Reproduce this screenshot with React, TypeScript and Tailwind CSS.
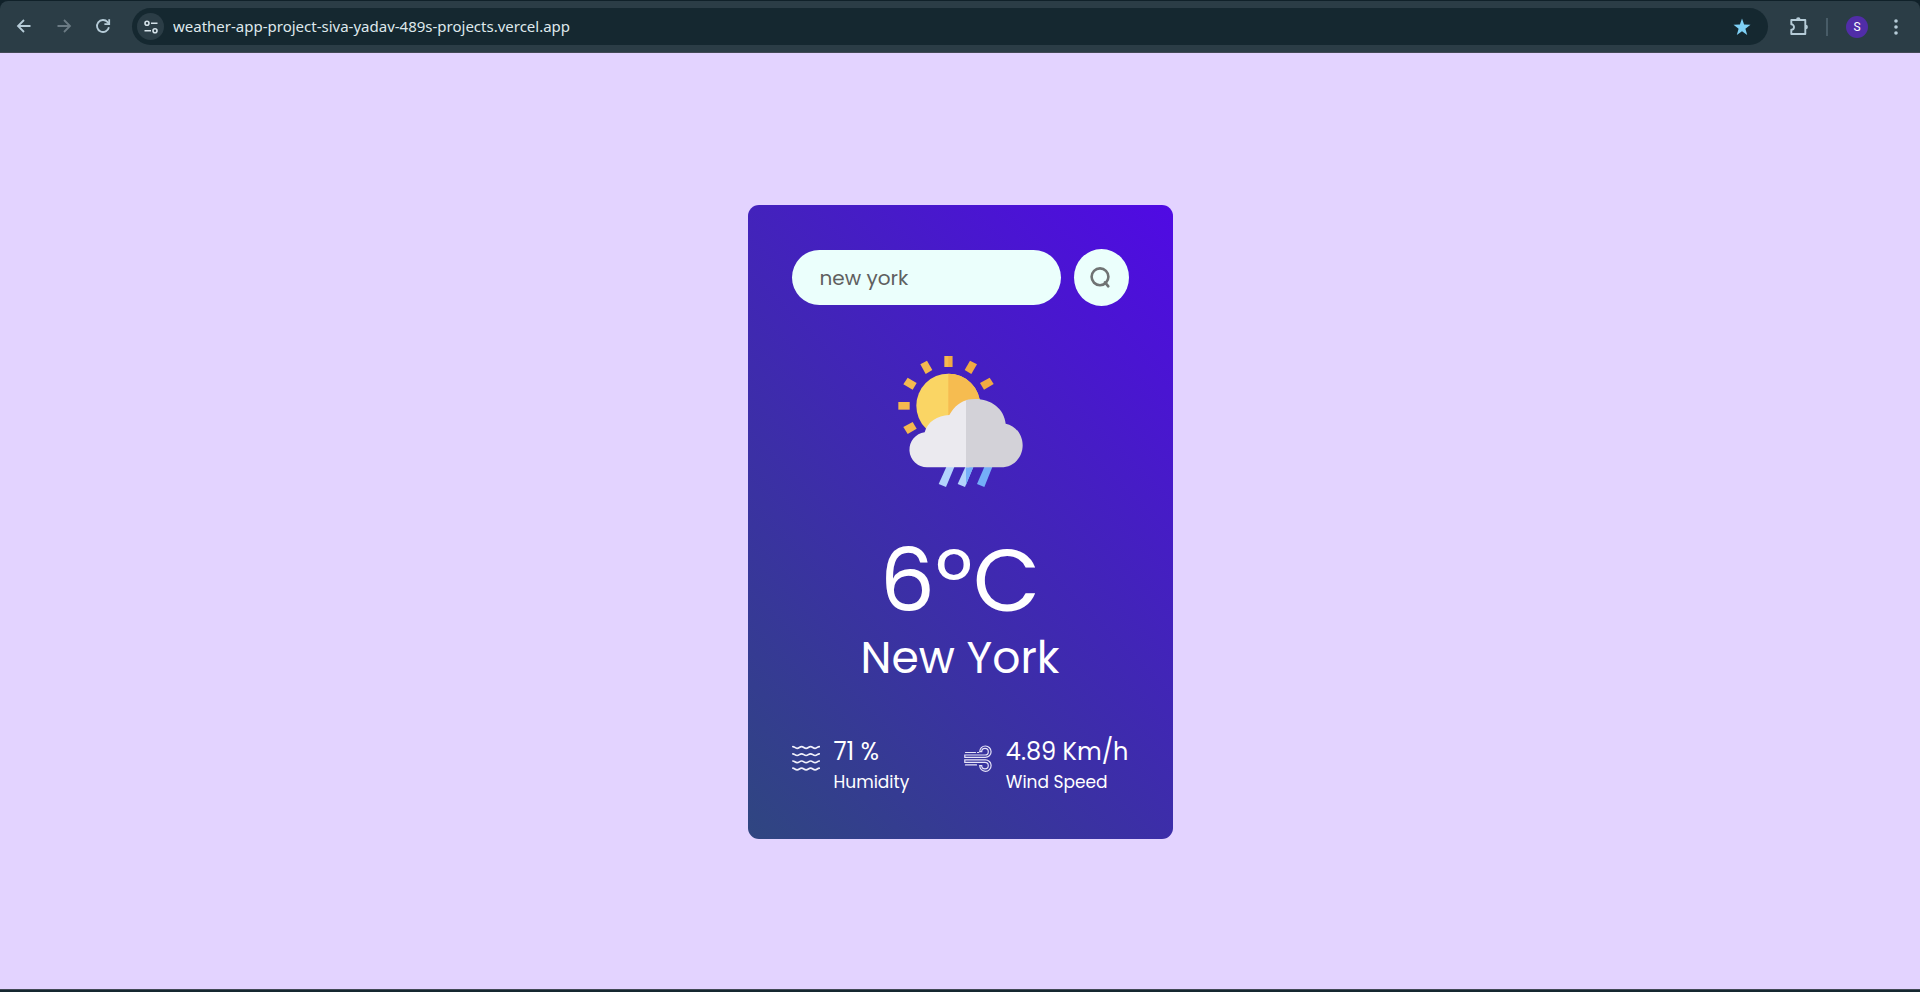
import type { ReactNode } from "react";

function ToolbarButton({ label, className, children }: { label: string; className: string; children: ReactNode }) {
  return (
    <button type="button" aria-label={label} className={`flex size-8 shrink-0 items-center justify-center ${className}`}>
      {children}
    </button>
  );
}

function BrowserToolbar() {
  return (
    <header className="bg-[#102129] pt-px font-['Noto_Sans','Open_Sans',sans-serif]">
      <div className="flex h-[52px] items-center rounded-t-lg border-b border-[#434a56] bg-[#2b3d46] pr-2 pl-2">
        <ToolbarButton label="Back" className="pb-px text-[#b6ccd8]">
          <svg viewBox="0 0 16 16" className="size-4" fill="none" stroke="currentColor" strokeWidth="1.8">
            <path d="M14.5 8H2.5M8 2 2 8l6 6" />
          </svg>
        </ToolbarButton>
        <ToolbarButton label="Forward" className="ml-2 pb-px text-[#6b7b84]">
          <svg viewBox="0 0 16 16" className="size-4" fill="none" stroke="currentColor" strokeWidth="1.8">
            <path d="M1.5 8h12M8 2l6 6-6 6" />
          </svg>
        </ToolbarButton>
        <ToolbarButton label="Reload" className="ml-[7px] pb-px text-[#b6ccd8]">
          <svg viewBox="0 0 16 16" className="size-4" fill="none" stroke="currentColor" strokeWidth="1.8">
            <path d="M13.9 9.2A6 6 0 1 1 12.6 4.1L14 5.6" />
            <path d="M14.2 1.2v5H9.4" />
          </svg>
        </ToolbarButton>
        <div className="ml-[13px] flex h-[37px] min-w-0 flex-1 items-center rounded-full bg-[#152830] pr-2 pl-[5px]">
          <button
            type="button"
            aria-label="View site information"
            className="flex size-[27px] shrink-0 items-center justify-center rounded-full bg-[#2b3d46] text-[#d5e2e9]"
          >
            <svg viewBox="0 0 16 16" className="size-4" fill="none" stroke="currentColor" strokeWidth="1.6">
              <circle cx="4" cy="4.3" r="2" />
              <path d="M8 4.3h6.5M1.5 11.7h6.5" />
              <circle cx="12" cy="11.7" r="2" />
            </svg>
          </button>
          <input
            aria-label="Address"
            type="text"
            defaultValue="weather-app-project-siva-yadav-489s-projects.vercel.app"
            className="ml-[9px] h-7 min-w-0 flex-1 bg-transparent pb-0.5 text-[15px] text-[#dfe8ec] outline-none"
          />
          <button type="button" aria-label="Bookmark this tab" className="flex size-9 items-center justify-center text-[#7ed0f5]">
            <svg viewBox="0 0 18 18" className="size-[18px]" fill="currentColor">
              <path d="M9 .6l2.1 6 6.4.2-5.1 3.9 1.8 6.2L9 13.2l-5.2 3.7 1.8-6.2L.5 6.8l6.4-.2z" />
            </svg>
          </button>
        </div>
        <ToolbarButton label="Extensions" className="ml-[15px] pb-px text-[#b6ccd8]">
          <svg viewBox="0 0 18 18" className="size-[18px]" fill="none" stroke="currentColor" strokeWidth="1.9" strokeLinejoin="round">
            <path d="M1.3 3h14v14h-14v-4.300a2.700 2.700 0 0 0 0-5.400z" />
            <path d="M6.100 2.500a2.200 2.200 0 0 1 4.400 0zM15.700 7.800a2.200 2.200 0 0 1 0 4.400z" fill="currentColor" stroke="none" />
          </svg>
        </ToolbarButton>
        <div className="ml-[11px] h-[18px] w-0.5 bg-[#485c67]" />
        <ToolbarButton label="Profile" className="ml-[13px]">
          <span className="flex size-[22px] items-center justify-center rounded-full bg-[#512da8] font-[Roboto,sans-serif] text-xs leading-none text-white">
            S
          </span>
        </ToolbarButton>
        <ToolbarButton label="Menu" className="ml-[7px] text-[#b6ccd8]">
          <svg viewBox="0 0 16 16" className="size-4" fill="currentColor">
            <circle cx="8" cy="2" r="1.8" />
            <circle cx="8" cy="8" r="1.8" />
            <circle cx="8" cy="14" r="1.8" />
          </svg>
        </ToolbarButton>
      </div>
    </header>
  );
}

function RainIcon() {
  return (
    <svg viewBox="0 0 480 480" className="size-40" role="img" aria-label="Rain">
      <g fill="#f5b94f">
        <path d="M193 48h24v33h-24z" />
        <path d="M121 73l20-11 16 28-20 12z" />
        <path d="M83 113l27 16-12 20-28-16z" />
        <path d="M55 186h34v23H55z" />
        <path d="M70 261l28-15 12 20-27 16z" />
      </g>
      <g fill="#f1aa43">
        <path d="M205 48h12v33h-12z" />
        <path d="M270 62l21 11-17 29-20-12z" />
        <path d="M329 113l12 19-29 17-12-20z" />
      </g>
      <circle cx="205" cy="197" r="96" fill="#fad564" />
      <path d="M205 101a96 96 0 0 1 0 192z" fill="#f6bc50" />
      <path d="M199 381h24l-25 60-22-9z" fill="#b3d3fc" />
      <path d="M256 381h24l-25 60-22-9z" fill="#b3d3fc" />
      <path d="M258 381h22l-22 53z" fill="#74aef8" />
      <path d="M313 381h24l-24 60-22-9z" fill="#74aef8" />
      <path
        d="M141 382a53 53 0 0 1-7-105.500C143 246 171 226 208 225c15-27 35-43 60-46v203z"
        fill="#ebeaef"
      />
      <path d="M258 180c58-14 114 17 119 71 29 5 51 33 51 65 0 37-28 66-65 66H258z" fill="#d3d2d8" />
    </svg>
  );
}

const WAVE = "c1.8 0 2.3 1.7 4.3 1.7s2.5-1.7 4.5-1.7 2.5 1.7 4.5 1.7 2.5-1.7 4.5-1.7 2.5 1.7 4.5 1.7 2.3-1.7 4.2-1.7";

function HumidityIcon() {
  return (
    <svg viewBox="0 0 28 28" className="size-7" fill="none" stroke="#f1f1fb" strokeWidth="1.7" strokeLinecap="round" aria-hidden="true">
      {[1.6, 8.8, 16, 23.2].map((y) => (
        <path key={y} d={`M.8 ${y}${WAVE}`} />
      ))}
    </svg>
  );
}

function WindIcon() {
  return (
    <svg viewBox="0 0 28 28" className="size-7" fill="none" stroke="#e6e4f8" strokeWidth="1.2" strokeLinecap="round" aria-hidden="true">
      <path d="M1.5 7.5h10M13.5 7.5h1.2" />
      <path d="M.8 10H21a3.3 3.3 0 1 0-3.3-3.3h-2A5.7 5.7 0 1 1 21.3 12.4H.8z" />
      <path d="M.8 14.9h20.5a5.7 5.7 0 1 1-5.6 5.7h2a3.3 3.3 0 1 0 3.3-3.3H.8z" />
      <path d="M1.5 19.9h11" />
    </svg>
  );
}

function Detail({ icon, value, label }: { icon: ReactNode; value: string; label: string }) {
  return (
    <div className="flex items-start gap-3.5">
      <div className="pt-2.5">{icon}</div>
      <div>
        <p className="text-2xl leading-[34px]">{value}</p>
        <p className="text-[17px] leading-[26px]">{label}</p>
      </div>
    </div>
  );
}

function WeatherCard() {
  return (
    <section className="w-full max-w-[425px] rounded-[11px] bg-[linear-gradient(45deg,#2f4680,#500ae4)] p-11 text-white">
      <form className="flex items-center gap-[13px]" onSubmit={(event) => event.preventDefault()}>
        <input
          type="text"
          aria-label="City"
          defaultValue="new york"
          spellCheck={false}
          className="h-[55px] min-w-0 flex-1 rounded-full bg-[#ebfffc] px-7 text-xl text-[#606060] outline-none"
        />
        <button
          type="submit"
          aria-label="Search"
          className="flex h-[57px] w-[55px] shrink-0 items-center justify-center rounded-[50%] bg-[#ebfffc]"
        >
          <svg viewBox="0 0 22 22" className="size-[22px]" fill="none" stroke="#6f7373" strokeWidth="2.6" strokeLinecap="round">
            <circle cx="10" cy="9.800" r="8.400" />
            <path d="M15 15.300l3.300 4" />
          </svg>
        </button>
      </form>
      <div className="mt-[34px] flex flex-col items-center">
        <RainIcon />
        <h1 className="mt-[30px] text-[87px] leading-[102px]">6ºC</h1>
        <h2 className="text-[44px] leading-[52px]">New York</h2>
      </div>
      <div className="mt-[51px] flex justify-between">
        <Detail icon={<HumidityIcon />} value="71 %" label="Humidity" />
        <Detail icon={<WindIcon />} value="4.89 Km/h" label="Wind Speed" />
      </div>
    </section>
  );
}

export default function App() {
  return (
    <div className="flex min-h-screen flex-col bg-[#e3d3ff]">
      <BrowserToolbar />
      <main className="flex flex-1 items-center justify-center pt-0.5 font-[Poppins,Inter,sans-serif]">
        <WeatherCard />
      </main>
      <footer className="h-[3px] border-t border-[#434a56] bg-[#152830]" />
    </div>
  );
}
